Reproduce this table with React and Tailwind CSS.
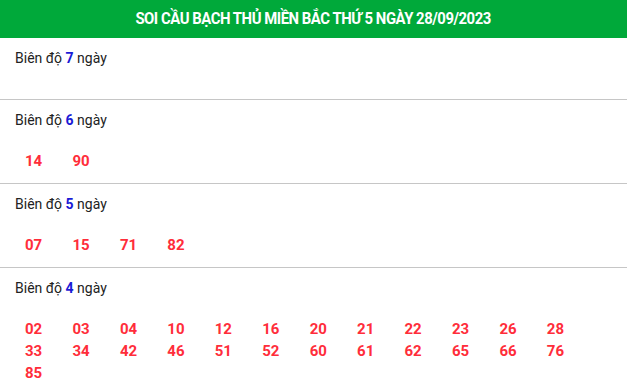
import React from 'react';

const sections = [
    { days: 7, nums: [] },
    { days: 6, nums: ['14', '90'] },
    { days: 5, nums: ['07', '15', '71', '82'] },
    {
        days: 4,
        nums: ['02', '03', '04', '10', '12', '16', '20', '21', '22', '23', '26', '28',
            '33', '34', '42', '46', '51', '52', '60', '61', '62', '65', '66', '76', '85'],
    },
];

export default function App() {
    return (
        <div className="w-[627px] h-[392px] overflow-hidden bg-white" style={{ fontFamily: 'Roboto, "Liberation Sans", sans-serif' }}>
            <div className="h-[38px] bg-[#00a93a] flex items-center justify-center">
                <h2 className="text-white font-bold text-[16px] tracking-[-0.5px] scale-x-[0.93] whitespace-nowrap">
                    SOI CẦU BẠCH THỦ MIỀN BẮC THỨ 5 NGÀY 28/09/2023
                </h2>
            </div>
            {sections.map(s => (
                <div key={s.days} className="border-b border-[#c6c6c6] pt-[10px] pb-[11px]">
                    <div className="px-[15px] text-[14px] leading-[20px] text-[#222] mb-[20px]">
                        Biên độ <span className="font-bold text-[#1a1ad6]">{s.days}</span> ngày
                    </div>
                    <div className="pl-[25px] grid grid-cols-[repeat(12,47.45px)]">
                        {s.nums.map(n => (
                            <span key={n} className="text-[15px] leading-[22px] font-bold text-[#ff2d3a]">{n}</span>
                        ))}
                    </div>
                </div>
            ))}
        </div>
    );
}
